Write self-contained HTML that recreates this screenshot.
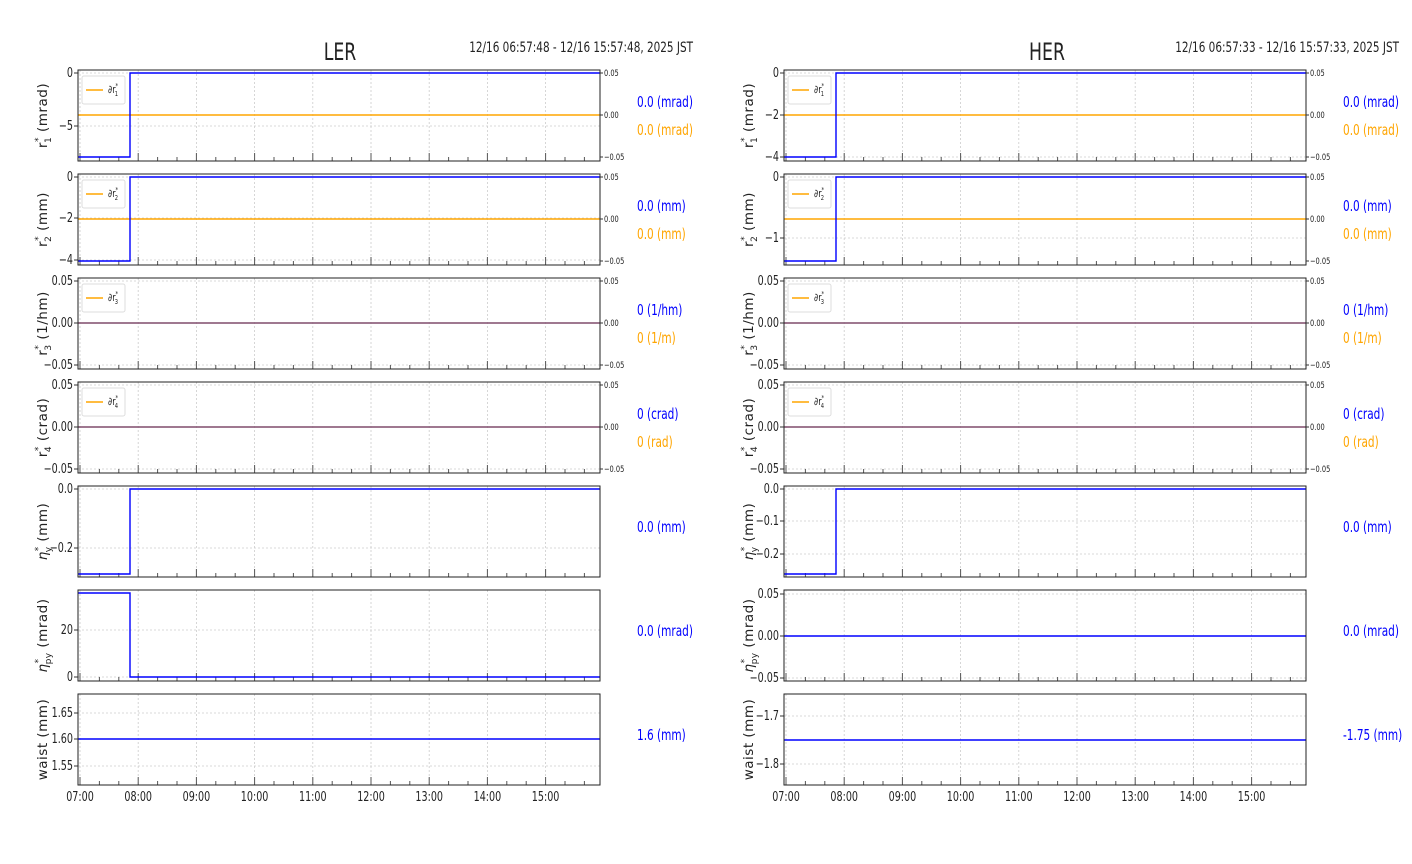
<!DOCTYPE html>
<html><head><meta charset="utf-8"><style>
html,body{margin:0;padding:0;background:#fff;width:1412px;height:864px;overflow:hidden}
svg text{font-family:"Liberation Sans Narrow","DejaVu Sans Condensed","DejaVu Sans",sans-serif;fill:#222}
.ax{font-family:"DejaVu Sans","Liberation Sans",sans-serif!important}
</style></head><body>
<svg id="s" width="1412" height="864" xmlns="http://www.w3.org/2000/svg">
<text transform="translate(340 60) scale(0.8 1)" font-size="24" text-anchor="middle">LER</text>
<text transform="translate(693 52) scale(0.83 1)" font-size="14" text-anchor="end">12/16 06:57:48 - 12/16 15:57:48, 2025 JST</text>
<text transform="translate(1047 60) scale(0.8 1)" font-size="24" text-anchor="middle">HER</text>
<text transform="translate(1399 52) scale(0.83 1)" font-size="14" text-anchor="end">12/16 06:57:33 - 12/16 15:57:33, 2025 JST</text>
</svg>
<script>
var S=document.getElementById('s'),h='';
function T(x,y,fs,anc,c,st,sc){return '<text transform="translate('+x+' '+y+') scale('+(sc||0.82)+' 1)" font-size="'+fs+'" text-anchor="'+anc+'"'+(st?' style="'+st+'"':'')+'>'+c+'</text>';}
var tops=[70,174,278,382,486,590,694],H=91;
var lab=[['r','1','(mrad)'],['r','2','(mm)'],['r','3','(1/hm)'],['r','4','(crad)'],['η','y','(mm)'],['η','py','(mrad)'],['w','','']];
var txt=[[['0.0 (mrad)','0.0 (mrad)'],['0.0 (mm)','0.0 (mm)'],['0 (1/hm)','0 (1/m)'],['0 (crad)','0 (rad)'],['0.0 (mm)'],['0.0 (mrad)'],['1.6 (mm)']],
[['0.0 (mrad)','0.0 (mrad)'],['0.0 (mm)','0.0 (mm)'],['0 (1/hm)','0 (1/m)'],['0 (crad)','0 (rad)'],['0.0 (mm)'],['0.0 (mrad)'],['-1.75 (mm)']]];
var P=[
[{t:[['0',73],['−5',126]],b:[157,73],o:115},{t:[['0',177],['−2',218],['−4',260]],b:[261,177],o:219},
{t:[['0.05',281],['0.00',323],['−0.05',365]],b:[323,323],o:323},{t:[['0.05',385],['0.00',427],['−0.05',469]],b:[427,427],o:427},
{t:[['0.0',489],['−0.2',548]],b:[574,489]},{t:[['20',630],['0',677]],b:[593,677]},{t:[['1.65',713],['1.60',739],['1.55',766]],b:[739,739]}],
[{t:[['0',73],['−2',115],['−4',157]],b:[157,73],o:115},{t:[['0',177],['−1',238]],b:[261,177],o:219},
{t:[['0.05',281],['0.00',323],['−0.05',365]],b:[323,323],o:323},{t:[['0.05',385],['0.00',427],['−0.05',469]],b:[427,427],o:427},
{t:[['0.0',489],['−0.1',521],['−0.2',554]],b:[574,489]},{t:[['0.05',594],['0.00',636],['−0.05',678]],b:[636,636]},{t:[['−1.7',716],['−1.8',764]],b:[740,740]}]];
for(var s=0;s<2;s++){
 var X0=s?784:78,X1=X0+522,hx=X0+2,st=X0+52,tx=s?1343:637;
 for(var i=0;i<7;i++){
  var Tp=tops[i],B=Tp+H,p=P[s][i];
  for(var k=0;k<9;k++){var x=hx+58.2*k;h+='<line x1="'+x+'" y1="'+Tp+'" x2="'+x+'" y2="'+B+'" stroke="#ccc" stroke-width="0.8" stroke-dasharray="2,2"/>';}
  p.t.forEach(function(q){h+='<line x1="'+X0+'" y1="'+q[1]+'" x2="'+X1+'" y2="'+q[1]+'" stroke="#ccc" stroke-width="0.8" stroke-dasharray="2,2"/>';
   h+='<line x1="'+(X0-4)+'" y1="'+q[1]+'" x2="'+X0+'" y2="'+q[1]+'" stroke="#333"/>';
   h+=T(X0-5,q[1]+4,13,'end',q[0]);});
  for(var k=0;k<27;k++){var x=hx+19.4*k;if(x>X1)break;var L=(k%3==0)?8:4;h+='<line x1="'+x+'" y1="'+B+'" x2="'+x+'" y2="'+(B-L)+'" stroke="#555"/>';}
  if(p.o!==undefined)h+='<line x1="'+X0+'" y1="'+p.o+'" x2="'+X1+'" y2="'+p.o+'" stroke="#ffa500" stroke-width="1.5"/>';
  h+='<path d="M'+X0+' '+p.b[0]+'H'+st+'V'+p.b[1]+'H'+X1+'" fill="none" stroke="#0000ff" stroke-width="1.4" opacity="'+(i==2||i==3?0.5:1)+'"/>';
  h+='<rect x="'+X0+'" y="'+Tp+'" width="522" height="'+H+'" fill="none" stroke="#222" stroke-width="1"/>';
  if(i<4){[['0.05',Tp+3],['0.00',Tp+45],['−0.05',Tp+87]].forEach(function(q){h+='<line x1="'+X1+'" y1="'+q[1]+'" x2="'+(X1+3)+'" y2="'+q[1]+'" stroke="#333"/>'+T(X1+4,q[1]+3,9,'start',q[0]);});
   h+='<rect x="'+(X0+4)+'" y="'+(Tp+6)+'" width="43" height="28" rx="2" fill="#fff" stroke="#ddd"/><line x1="'+(X0+8)+'" y1="'+(Tp+20)+'" x2="'+(X0+25)+'" y2="'+(Tp+20)+'" stroke="#ffa500" stroke-width="1.5"/>';
   h+=T(X0+30,Tp+23,11,'start','∂r<tspan font-size="7" dy="-5">*</tspan><tspan font-size="7" dx="-4" dy="8">'+(i+1)+'</tspan>');}
  var tt=txt[s][i];
  if(tt.length==2){h+=T(tx,Tp+37,15,'start',tt[0],'fill:#0000ff',0.78)+T(tx,Tp+65,15,'start',tt[1],'fill:#ffa500',0.78);}
  else h+=T(tx,Tp+46,15,'start',tt[0],'fill:#0000ff',0.78);
  var cx=X0-31,cy=Tp+H/2,l=lab[i],inner;
  if(l[0]=='w')inner='waist (mm)';else inner=(l[0]=='η'?'<tspan font-style="italic">η</tspan>':'r')+'<tspan font-size="9" dy="-6">*</tspan><tspan font-size="9" dx="-6" dy="10">'+l[1]+'</tspan><tspan dy="-4"> '+l[2]+'</tspan>';
  h+='<text class="ax" transform="translate('+cx+' '+cy+') rotate(-90)" font-size="13.5" letter-spacing="0.5" text-anchor="middle">'+inner+'</text>';
 }
 for(var k=0;k<9;k++){var x=hx+58.2*k;h+=T(x,801,13,'middle',('0'+(7+k)).slice(-2)+':00');}
}
S.insertAdjacentHTML('beforeend',h);
</script>
</body></html>
